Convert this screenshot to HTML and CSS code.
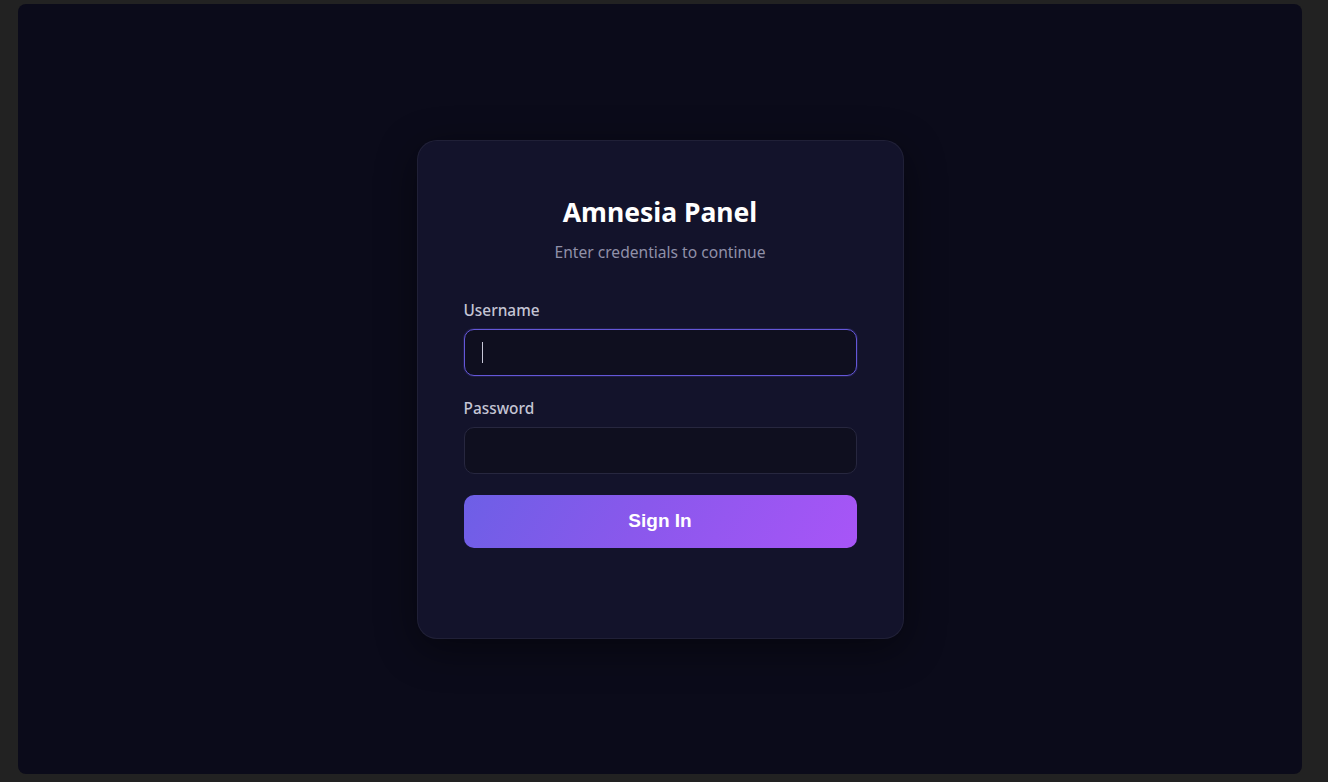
FILE: index.html
```html
<!DOCTYPE html>
<html lang="en">
<head>
<meta charset="utf-8">
<title>Amnesia Panel</title>
<link rel="stylesheet" href="styles.css">
</head>
<body>
<div class="screen">
  <form class="card">
    <h1 class="title">Amnesia Panel</h1>
    <p class="subtitle">Enter credentials to continue</p>
    <label class="label" for="username">Username</label>
    <div class="field">
      <input id="username" class="input input-focus" type="text">
      <span class="caret"></span>
    </div>
    <label class="label" for="password">Password</label>
    <div class="field">
      <input id="password" class="input" type="password">
    </div>
    <button type="button" class="btn">Sign In</button>
  </form>
</div>
</body>
</html>
```

FILE: styles.css
```css
* { box-sizing: border-box; }
html, body { height: 100%; }
body {
  margin: 0;
  background: #222222;
  padding: 4px 26px 8px 18px;
  font-family: "Noto Sans", "Open Sans", sans-serif;
}
.screen {
  height: 100%;
  background: #0b0b1a;
  border-radius: 8px;
  display: flex;
  align-items: center;
  justify-content: center;
}
.card {
  width: 487px;
  background: #13132b;
  border: 1px solid rgba(255,255,255,0.06);
  border-radius: 20px;
  padding: 54px 46px 90px;
  display: flex;
  flex-direction: column;
  box-shadow: 0 10px 40px rgba(0,0,0,0.45);
}
.title {
  margin: 0 0 12px;
  font-size: 26.5px;
  line-height: 34px;
  font-weight: 700;
  color: #ffffff;
  text-align: center;
}
.subtitle {
  margin: 0 0 37px;
  font-size: 15.6px;
  line-height: 22px;
  color: #9090a8;
  text-align: center;
}
.label {
  font-size: 15.4px;
  line-height: 22px;
  font-weight: 500;
  color: #c4c4d4;
  margin-bottom: 7px;
}
.field {
  position: relative;
  margin-bottom: 22px;
}
.input {
  display: block;
  width: 100%;
  height: 47px;
  border: 1px solid #27273f;
  border-radius: 10px;
  background: #0f0f1f;
  padding: 0 16px;
  color: #ffffff;
  font-size: 15px;
  outline: none;
}
.input-focus {
  border-color: #6457d8;
  box-shadow: 0 0 0 1px rgba(100,87,216,0.15);
}
.caret {
  position: absolute;
  left: 18px;
  top: 13px;
  width: 1px;
  height: 21px;
  background: #c8c8d8;
}
.btn {
  margin-top: -1px;
  height: 53px;
  border: none;
  border-radius: 10px;
  background: linear-gradient(120deg, #6d5fe6 0%, #8a58ec 45%, #a855f7 100%);
  color: #ffffff;
  font-family: "Liberation Sans", Arial, sans-serif;
  font-size: 19px;
  font-weight: 700;
  cursor: pointer;
}
```
